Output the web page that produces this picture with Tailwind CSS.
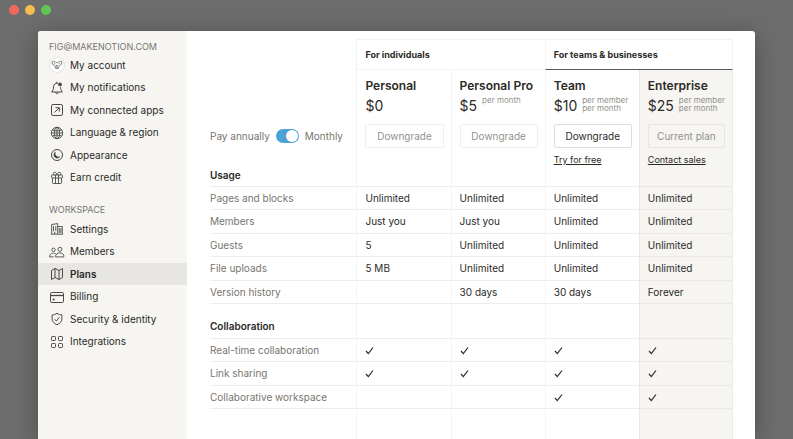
<!DOCTYPE html>
<html lang="en">
<head>
    <meta charset="UTF-8">
    <meta name="viewport" content="width=device-width, initial-scale=1.0">
    <title>Plans</title>
    <script src="https://cdn.jsdelivr.net/npm/@tailwindcss/browser@4"></script>
</head>
<body class="flex min-h-screen flex-col bg-[#6d6d6d] font-[Inter,sans-serif] text-[10px] text-[#2b2a27]">

    <!-- Window buttons -->
    <header class="flex h-[31px] items-start gap-[6px] px-[9px] pt-[5px]">
        <button aria-label="Close" class="size-[10px] rounded-full bg-[#ee6a5f]"></button>
        <button aria-label="Minimize" class="size-[10px] rounded-full bg-[#f5bd4f]"></button>
        <button aria-label="Zoom" class="size-[10px] rounded-full bg-[#61c454]"></button>
    </header>

    <div class="mx-[38px] flex flex-1 overflow-hidden rounded-t-[3px] bg-white shadow-[0_4px_24px_rgba(0,0,0,0.3)]">

        <!-- Sidebar -->
        <nav class="w-[149px] shrink-0 bg-[#f6f5f2] pt-2">
            <h2 class="h-[15px] pl-[11px] pt-px text-[9px] leading-[14px] text-[#77756f]">FIG@MAKENOTION.COM</h2>
            <ul>
                <li class="odd:h-[22px] even:h-[23px]">
                    <a href="#" class="flex h-full items-center gap-[6px] pl-[12px]">
                        <span class="flex size-[14px] items-center justify-center rounded-full bg-white shadow-[0_0_2px_rgba(0,0,0,0.2)]">
                            <svg class="size-[12px]" viewBox="0 0 14 14" fill="none" stroke="#666" stroke-width="0.9" stroke-linejoin="round"><path d="M1.500 3 4 2.500 5.500 4h3L10 2.500l2.500.5v3l-2.500 1.500L8.500 11h-3L4.500 7.500 1.500 6zM3.500 4.500 5 6M10.500 4.500 9 6M6 7.500h2l-1 1.200zM5.500 10l1.500-.7 1.500.7"/></svg>
                        </span>
                        My account
                    </a>
                </li>
                <li class="odd:h-[22px] even:h-[23px]">
                    <a href="#" class="flex h-full items-center gap-[6px] pl-[12px]">
                        <svg class="size-[14px]" viewBox="0 0 14 14" fill="none" stroke="#4a4945" stroke-linejoin="round" stroke-linecap="round"><path d="M7.500 2.200C5 1.800 3.700 3.500 3.600 6c-.1 2.500-.8 3.500-1.900 5h10.600c-1.100-1.500-1.700-2.700-1.800-4.500M5.700 11.500c.2 1.800 2.400 1.800 2.600 0M6.800 2V1.200"/><circle cx="10" cy="3.400" r="1.900" fill="#4a4945" stroke="none"/></svg>
                        My notifications
                    </a>
                </li>
                <li class="odd:h-[22px] even:h-[23px]">
                    <a href="#" class="flex h-full items-center gap-[6px] pl-[12px]">
                        <svg class="size-[14px]" viewBox="0 0 14 14" fill="none" stroke="#4a4945"><rect x="1.500" y="1.500" width="11" height="11" rx="1.600"/><path d="m4.500 9.500 4.600-4.600M5.500 4.700h3.800v3.800"/></svg>
                        My connected apps
                    </a>
                </li>
                <li class="odd:h-[22px] even:h-[23px]">
                    <a href="#" class="flex h-full items-center gap-[6px] pl-[12px]">
                        <svg class="size-[14px]" viewBox="0 0 14 14" fill="none" stroke="#4a4945" stroke-width="0.9"><circle cx="7" cy="7" r="5.700"/><ellipse cx="7" cy="7" rx="2.700" ry="5.700"/><path d="M7 1.300v11.400M1.300 7h11.400M2.300 4.200q4.700 1.500 9.400 0M2.300 9.800q4.700-1.500 9.400 0"/></svg>
                        Language &amp; region
                    </a>
                </li>
                <li class="odd:h-[22px] even:h-[23px]">
                    <a href="#" class="flex h-full items-center gap-[6px] pl-[12px]">
                        <svg class="size-[14px]" viewBox="0 0 14 14" fill="none" stroke="#4a4945"><circle cx="7" cy="7" r="5.500"/><path d="M6 3.600a3.500 3.500 0 1 0 4.400 4.500A3.200 3.200 0 0 1 6 3.600z" fill="#4a4945" stroke="none"/></svg>
                        Appearance
                    </a>
                </li>
                <li class="odd:h-[22px] even:h-[23px]">
                    <a href="#" class="flex h-full items-center gap-[6px] pl-[12px]">
                        <svg class="size-[14px]" viewBox="0 0 14 14" fill="none" stroke="#4a4945" stroke-width="0.9" stroke-linejoin="round"><rect x="1.500" y="4" width="11" height="3" rx="0.600"/><path d="M2.500 7v4.700q0 .8.8.8h7.400q.8 0 .8-.8V7M5.500 4v8.500M8.500 4v8.500M7 4C6.500 2 5.500 1.200 4.500 1.300c-1.700.2-1.500 2.500 0 2.700M7 4c.5-2 1.500-2.800 2.500-2.700 1.700.2 1.500 2.500 0 2.700"/></svg>
                        Earn credit
                    </a>
                </li>
            </ul>

            <h2 class="mt-[14px] h-[15px] pl-[11px] text-[9px] leading-[14px] text-[#77756f]">WORKSPACE</h2>
            <ul>
                <li class="odd:h-[22px] even:h-[23px]">
                    <a href="#" class="flex h-full items-center gap-[6px] pl-[12px]">
                        <svg class="size-[14px]" viewBox="0 0 14 14" fill="none" stroke="#4a4945" stroke-width="0.900"><path d="M1 12.200h12M1.700 12V2.500L7.700 1.600V12M7.700 4.500h4.600V12M4.700 12V9.800M3.500 4.200v5M5.800 4v5M9.300 6v5M10.900 6v5"/></svg>
                        Settings
                    </a>
                </li>
                <li class="odd:h-[22px] even:h-[23px]">
                    <a href="#" class="flex h-full items-center gap-[6px] pl-[12px]">
                        <svg class="size-[14px] overflow-visible" viewBox="0 0 14 14" fill="none" stroke="#4a4945" stroke-width="0.900" stroke-linejoin="round"><circle cx="3.500" cy="4.800" r="1.700"/><circle cx="9.900" cy="4.300" r="2"/><path d="M5.500 11.900h8.300c.3-2.400-1.300-4-3.900-4s-4.600 1.600-4.400 4zM5.700 8.700C3 7.300-.6 8.600-.3 11.900h4"/></svg>
                        Members
                    </a>
                </li>
                <li class="bg-[#e7e6e3] odd:h-[22px] even:h-[23px]">
                    <a href="#" aria-current="page" class="flex h-full items-center gap-[6px] pl-[12px] font-semibold">
                        <svg class="size-[14px]" viewBox="0 0 14 14" fill="none" stroke="#4a4945" stroke-linejoin="round"><path d="m1.500 3.500 3.500-2 4 2 3.500-2v9l-3.500 2-4-2-3.500 2zM5 1.500v9M9 3.500v9"/></svg>
                        Plans
                    </a>
                </li>
                <li class="odd:h-[22px] even:h-[23px]">
                    <a href="#" class="flex h-full items-center gap-[6px] pl-[12px]">
                        <svg class="size-[14px] overflow-visible" viewBox="0 0 14 14" fill="none" stroke="#4a4945"><rect x="0.500" y="2.500" width="13" height="10" rx="1.200"/><path d="M.5 5.500h13" stroke-width="1.300"/><path d="M2.700 9.500h2" stroke-width="1.600"/></svg>
                        Billing
                    </a>
                </li>
                <li class="odd:h-[22px] even:h-[23px]">
                    <a href="#" class="flex h-full items-center gap-[6px] pl-[12px]">
                        <svg class="size-[14px]" viewBox="0 0 14 14" fill="none" stroke="#4a4945" stroke-linejoin="round"><path d="M7 1.200c1.500 1.200 3 1.600 4.900 1.700v4c0 2.700-2 4.600-4.900 5.900-2.900-1.300-4.900-3.200-4.900-5.900v-4C4 2.800 5.500 2.400 7 1.200zM4.700 7.200l1.700 1.900 3-4"/></svg>
                        Security &amp; identity
                    </a>
                </li>
                <li class="odd:h-[22px] even:h-[23px]">
                    <a href="#" class="flex h-full items-center gap-[6px] pl-[12px]">
                        <svg class="size-[14px]" viewBox="0 0 14 14" fill="none" stroke="#4a4945"><rect x="1.500" y="1.500" width="4" height="4" rx="0.800"/><rect x="8.500" y="1.500" width="4" height="4" rx="0.800"/><rect x="1.500" y="8.500" width="4" height="4" rx="0.800"/><rect x="8.500" y="8.500" width="4" height="4" rx="0.800"/></svg>
                        Integrations
                    </a>
                </li>
            </ul>
        </nav>

        <!-- Plan comparison -->
        <main class="flex-1 pl-[23px] pr-[22px] pt-2">
            <table class="w-full table-fixed border-separate border-spacing-0 text-left">
                <colgroup>
                    <col class="w-[28%]">
                    <col class="w-[18%]">
                    <col class="w-[18%]">
                    <col class="w-[18%]">
                    <col class="w-[18%]">
                </colgroup>
                <thead>
                    <tr class="h-[31px] text-[9px]">
                        <td></td>
                        <th colspan="2" scope="colgroup" class="border-y border-l border-[#f3f3f2] pl-2 font-bold">For individuals</th>
                        <th colspan="2" scope="colgroup" class="border border-[#f3f3f2] border-b-[#5a5957] pl-2 font-bold">For teams &amp; businesses</th>
                    </tr>
                    <tr class="h-[99px] align-top">
                        <td class="pb-[25px] align-bottom text-[#77756f]">
                            <label class="flex items-center gap-[6px] whitespace-nowrap leading-4">
                                Pay annually
                                <input type="checkbox" checked class="h-[14px] w-[23px] shrink-0 appearance-none rounded-full bg-[#4ba3d8] before:ml-[10px] before:mt-[1px] before:block before:size-3 before:rounded-full before:bg-white">
                                Monthly
                            </label>
                        </td>
                        <th scope="col" class="border-l border-[#f3f3f2] pl-2 pr-[7px] pt-2 font-normal">
                            <h3 class="whitespace-nowrap text-[12px] font-semibold leading-4">Personal</h3>
                            <div class="flex h-[23px] items-start gap-[5px]">
                                <span class="text-[14px] leading-[23px]">$0</span>
                            </div>
                            <button disabled class="mt-[7px] h-6 w-full whitespace-nowrap rounded-[2px] border border-[#eeeeed] text-[#93918d]">Downgrade</button>
                        </th>
                        <th scope="col" class="border-l border-[#f3f3f2] pl-2 pr-[7px] pt-2 font-normal">
                            <h3 class="whitespace-nowrap text-[12px] font-semibold leading-4">Personal Pro</h3>
                            <div class="flex h-[23px] items-start gap-[5px]">
                                <span class="text-[14px] leading-[23px]">$5</span>
                                <small class="whitespace-nowrap pt-[2px] text-[8px] leading-[8px] text-[#93918d]">per month</small>
                            </div>
                            <button disabled class="mt-[7px] h-6 w-full whitespace-nowrap rounded-[2px] border border-[#eeeeed] text-[#93918d]">Downgrade</button>
                        </th>
                        <th scope="col" class="border-l border-[#f3f3f2] pl-2 pr-[7px] pt-2 font-normal">
                            <h3 class="whitespace-nowrap text-[12px] font-semibold leading-4">Team</h3>
                            <div class="flex h-[23px] items-start gap-[5px]">
                                <span class="text-[14px] leading-[23px]">$10</span>
                                <small class="whitespace-nowrap pt-[2px] text-[8px] leading-[8px] text-[#93918d]">per member<br>per month</small>
                            </div>
                            <button class="mt-[7px] h-6 w-full whitespace-nowrap rounded-[2px] border border-[#dededc]">Downgrade</button>
                            <a href="#" class="mt-1 block whitespace-nowrap text-[9px] leading-4 underline underline-offset-1">Try for free</a>
                        </th>
                        <th scope="col" class="border-x border-[#e9e8e5] bg-[#f6f5f2] pl-2 pr-[7px] pt-2 font-normal">
                            <h3 class="whitespace-nowrap text-[12px] font-semibold leading-4">Enterprise</h3>
                            <div class="flex h-[23px] items-start gap-[5px]">
                                <span class="text-[14px] leading-[23px]">$25</span>
                                <small class="whitespace-nowrap pt-[2px] text-[8px] leading-[8px] text-[#93918d]">per member<br>per month</small>
                            </div>
                            <button disabled class="mt-[7px] h-6 w-full whitespace-nowrap rounded-[2px] border border-[#e6e5e2] text-[#93918d]">Current plan</button>
                            <a href="#" class="mt-1 block whitespace-nowrap text-[9px] leading-4 underline underline-offset-1">Contact sales</a>
                        </th>
                    </tr>
                </thead>
                <tbody class="[&_td]:border-b [&_td]:border-l [&_td]:border-[#f3f3f2] [&_td]:border-b-[#ededec] [&_td]:pl-2 [&_td:last-child]:border-r [&_td:last-child]:border-[#e9e8e5] [&_td:last-child]:bg-[#f6f5f2] [&_th]:border-b [&_th]:border-[#ededec]">
                    <tr class="h-[18px]">
                        <th scope="rowgroup" class="align-top font-semibold leading-3">Usage</th>
                        <td></td><td></td><td></td><td></td>
                    </tr>
                    <tr class="even:h-[23px] odd:h-6">
                        <th scope="row" class="font-normal text-[#77756f]">Pages and blocks</th>
                        <td>Unlimited</td><td>Unlimited</td><td>Unlimited</td><td>Unlimited</td>
                    </tr>
                    <tr class="even:h-[23px] odd:h-6">
                        <th scope="row" class="font-normal text-[#77756f]">Members</th>
                        <td>Just you</td><td>Just you</td><td>Unlimited</td><td>Unlimited</td>
                    </tr>
                    <tr class="even:h-[23px] odd:h-6">
                        <th scope="row" class="font-normal text-[#77756f]">Guests</th>
                        <td>5</td><td>Unlimited</td><td>Unlimited</td><td>Unlimited</td>
                    </tr>
                    <tr class="even:h-[23px] odd:h-6">
                        <th scope="row" class="font-normal text-[#77756f]">File uploads</th>
                        <td>5 MB</td><td>Unlimited</td><td>Unlimited</td><td>Unlimited</td>
                    </tr>
                    <tr class="even:h-[23px] odd:h-6">
                        <th scope="row" class="font-normal text-[#77756f]">Version history</th>
                        <td></td><td>30 days</td><td>30 days</td><td>Forever</td>
                    </tr>
                </tbody>
                <tbody class="[&_td]:border-b [&_td]:border-l [&_td]:border-[#f3f3f2] [&_td]:border-b-[#ededec] [&_td]:pl-2 [&_td:last-child]:border-r [&_td:last-child]:border-[#e9e8e5] [&_td:last-child]:bg-[#f6f5f2] [&_th]:border-b [&_th]:border-[#ededec]">
                    <tr class="h-[35px]">
                        <th scope="rowgroup" class="pb-[6px] align-bottom font-semibold leading-3">Collaboration</th>
                        <td></td><td></td><td></td><td></td>
                    </tr>
                    <tr class="even:h-[23px] odd:h-6">
                        <th scope="row" class="font-normal text-[#77756f]">Real-time collaboration</th>
                        <td><svg role="img" aria-label="Included" class="size-[9px]" viewBox="0 0 9 9" fill="none" stroke="#2b2a27" stroke-width="1.200"><path d="m1 5 2.300 2.600L8 1.500"/></svg></td>
                        <td><svg role="img" aria-label="Included" class="size-[9px]" viewBox="0 0 9 9" fill="none" stroke="#2b2a27" stroke-width="1.200"><path d="m1 5 2.300 2.600L8 1.500"/></svg></td>
                        <td><svg role="img" aria-label="Included" class="size-[9px]" viewBox="0 0 9 9" fill="none" stroke="#2b2a27" stroke-width="1.200"><path d="m1 5 2.300 2.600L8 1.500"/></svg></td>
                        <td><svg role="img" aria-label="Included" class="size-[9px]" viewBox="0 0 9 9" fill="none" stroke="#2b2a27" stroke-width="1.200"><path d="m1 5 2.300 2.600L8 1.500"/></svg></td>
                    </tr>
                    <tr class="even:h-[23px] odd:h-6">
                        <th scope="row" class="font-normal text-[#77756f]">Link sharing</th>
                        <td><svg role="img" aria-label="Included" class="size-[9px]" viewBox="0 0 9 9" fill="none" stroke="#2b2a27" stroke-width="1.200"><path d="m1 5 2.300 2.600L8 1.500"/></svg></td>
                        <td><svg role="img" aria-label="Included" class="size-[9px]" viewBox="0 0 9 9" fill="none" stroke="#2b2a27" stroke-width="1.200"><path d="m1 5 2.300 2.600L8 1.500"/></svg></td>
                        <td><svg role="img" aria-label="Included" class="size-[9px]" viewBox="0 0 9 9" fill="none" stroke="#2b2a27" stroke-width="1.200"><path d="m1 5 2.300 2.600L8 1.500"/></svg></td>
                        <td><svg role="img" aria-label="Included" class="size-[9px]" viewBox="0 0 9 9" fill="none" stroke="#2b2a27" stroke-width="1.200"><path d="m1 5 2.300 2.600L8 1.500"/></svg></td>
                    </tr>
                    <tr class="even:h-[23px] odd:h-6">
                        <th scope="row" class="font-normal text-[#77756f]">Collaborative workspace</th>
                        <td></td>
                        <td></td>
                        <td><svg role="img" aria-label="Included" class="size-[9px]" viewBox="0 0 9 9" fill="none" stroke="#2b2a27" stroke-width="1.200"><path d="m1 5 2.300 2.600L8 1.500"/></svg></td>
                        <td><svg role="img" aria-label="Included" class="size-[9px]" viewBox="0 0 9 9" fill="none" stroke="#2b2a27" stroke-width="1.200"><path d="m1 5 2.300 2.600L8 1.500"/></svg></td>
                    </tr>
                </tbody>
                <tfoot>
                    <tr class="h-[30px]">
                        <td></td>
                        <td class="border-l border-[#f3f3f2]"></td>
                        <td class="border-l border-[#f3f3f2]"></td>
                        <td class="border-l border-[#f3f3f2]"></td>
                        <td class="border-x border-[#e9e8e5] bg-[#f6f5f2]"></td>
                    </tr>
                </tfoot>
            </table>
        </main>
    </div>
</body>
</html>
